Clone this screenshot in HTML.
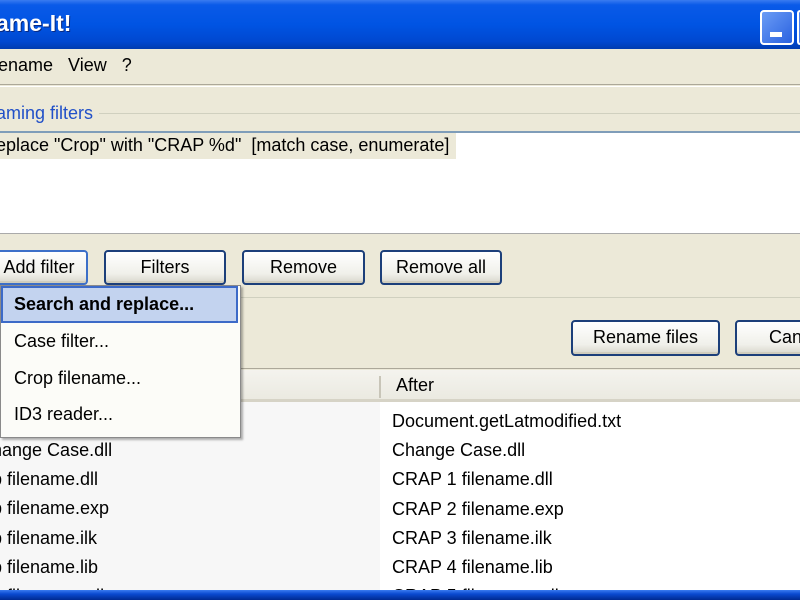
<!DOCTYPE html>
<html style="width:800px;height:600px;overflow:hidden"><head><style>
*{margin:0;padding:0;box-sizing:border-box}
body{width:800px;height:600px;overflow:hidden;background:#ECE9D8;font-family:"Liberation Sans",sans-serif;font-size:18px;color:#000;position:relative}
.a{position:absolute;white-space:nowrap}
.btn{position:absolute;border:2px solid #1c3f7a;border-radius:4px;background:linear-gradient(#fff,#f0f0ea 70%,#d8d6cc);text-align:center;line-height:30px;box-shadow:inset 0 -2px 0 #d0cdbd;overflow:hidden}
</style></head><body>
<div class="a" style="left:0;top:0;width:800px;height:49px;background:linear-gradient(#3a7bf0 0,#0a5ae8 10%,#0054e3 50%,#0048d0 85%,#003cb0 100%)"></div>
<div class="a" style="left:-4px;top:10px;color:#fff;font-weight:bold;font-size:23px;text-shadow:1px 1px 0 #0a2a80">ame-It!</div>
<div class="a" style="left:760px;top:10px;width:34px;height:35px;border:2px solid #fff;border-radius:4px;background:linear-gradient(135deg,#6b9cf5,#2a62e0)"></div>
<div class="a" style="left:770px;top:32px;width:12px;height:5px;background:#fff"></div>
<div class="a" style="left:797px;top:10px;width:3px;height:35px;border:2px solid #fff;border-right:none;border-radius:4px 0 0 4px;background:#4a80ec"></div>
<div class="a" style="left:-2px;top:55px">ename&nbsp;&nbsp;&nbsp;View&nbsp;&nbsp;&nbsp;?</div>
<div class="a" style="left:0;top:84px;width:800px;height:3px;border-top:1px solid #aca899;border-bottom:1px solid #fff"></div>
<div class="a" style="left:0;top:113px;width:800px;border-top:1px solid #d0d0bf"></div>
<div class="a" style="left:-4px;top:103px;color:#2150c8;background:#ECE9D8;padding-right:6px">aming filters</div>
<div class="a" style="left:0;top:131px;width:800px;height:103px;background:#fff;border-top:2px solid #7f9db9;border-bottom:1px solid #aaa"></div>
<div class="a" style="left:0;top:133px;width:456px;height:26px;background:#ECE9D8"></div>
<div class="a" style="left:-4px;top:135px">eplace "Crop" with "CRAP %d"&nbsp; [match case, enumerate]</div>
<div class="btn" style="left:-10px;top:250px;width:98px;height:35px;border-color:#3c6fc8">Add filter</div>
<div class="btn" style="left:104px;top:250px;width:122px;height:35px">Filters</div>
<div class="btn" style="left:242px;top:250px;width:123px;height:35px">Remove</div>
<div class="btn" style="left:380px;top:250px;width:122px;height:35px">Remove all</div>
<div class="a" style="left:0;top:297px;width:800px;border-top:1px solid #d0d0bf"></div>
<div class="btn" style="left:571px;top:320px;width:149px;height:36px">Rename files</div>
<div class="btn" style="left:735px;top:320px;width:80px;height:36px;text-align:left;padding-left:32px">Cancel</div>
<div class="a" style="left:0;top:368px;width:800px;border-top:1px solid #aca899"></div>
<div class="a" style="left:0;top:370px;width:800px;height:32px;background:linear-gradient(#f4f3ee,#ebeae1);border-bottom:3px solid #d6d3c6"></div>
<div class="a" style="left:379px;top:376px;width:2px;height:22px;background:#c8c5b8"></div>
<div class="a" style="left:396px;top:375px">After</div>
<div class="a" style="left:0;top:402px;width:380px;height:190px;background:#f7f7f7"></div>
<div class="a" style="left:380px;top:402px;width:420px;height:190px;background:#fff"></div>
<div class="a" style="left:392px;top:407px;line-height:29.2px;height:183px;overflow:hidden">Document.getLatmodified.txt<br>Change Case.dll<br>CRAP 1 filename.dll<br>CRAP 2 filename.exp<br>CRAP 3 filename.ilk<br>CRAP 4 filename.lib<br>CRAP 5 filename.pdb</div>
<div class="a" style="left:-8px;top:436px;line-height:29.2px;height:154px;overflow:hidden">hange Case.dll<br>p filename.dll<br>p filename.exp<br>p filename.ilk<br>p filename.lib<br>p filename.pdb</div>
<div class="a" style="left:0;top:285px;width:241px;height:153px;background:#fcfcf8;border:1px solid #8a8a8a;box-shadow:2px 2px 2px rgba(0,0,0,.3)"></div>
<div class="a" style="left:1px;top:286px;width:237px;height:37px;background:#c3d3ef;border:2px solid #3c6ac8"></div>
<div class="a" style="left:14px;top:294px;font-weight:bold">Search and replace...</div>
<div class="a" style="left:14px;top:331px">Case filter...</div>
<div class="a" style="left:14px;top:368px">Crop filename...</div>
<div class="a" style="left:14px;top:404px">ID3 reader...</div>
<div class="a" style="left:0;top:590px;width:800px;height:10px;background:linear-gradient(#3a7bf0,#0a4ad0 40%,#002a90)"></div>
</body></html>
